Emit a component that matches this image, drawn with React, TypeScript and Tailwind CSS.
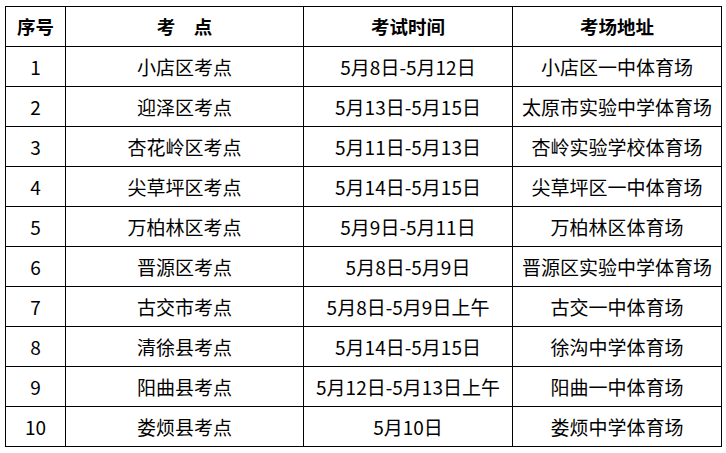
const rows = [
  ["1", "小店区考点", "5月8日-5月12日", "小店区一中体育场"],
  ["2", "迎泽区考点", "5月13日-5月15日", "太原市实验中学体育场"],
  ["3", "杏花岭区考点", "5月11日-5月13日", "杏岭实验学校体育场"],
  ["4", "尖草坪区考点", "5月14日-5月15日", "尖草坪区一中体育场"],
  ["5", "万柏林区考点", "5月9日-5月11日", "万柏林区体育场"],
  ["6", "晋源区考点", "5月8日-5月9日", "晋源区实验中学体育场"],
  ["7", "古交市考点", "5月8日-5月9日上午", "古交一中体育场"],
  ["8", "清徐县考点", "5月14日-5月15日", "徐沟中学体育场"],
  ["9", "阳曲县考点", "5月12日-5月13日上午", "阳曲一中体育场"],
  ["10", "娄烦县考点", "5月10日", "娄烦中学体育场"],
];

export default function App() {
  return (
    <div className="min-h-[453px] w-[726px] bg-white pl-[5px] pt-[6px] font-['Noto_Sans_CJK_SC',sans-serif] text-black">
      <table className="w-[716px] table-fixed border-collapse">
        <colgroup>
          <col className="w-[60px]" />
          <col className="w-[238px]" />
          <col className="w-[209px]" />
          <col className="w-[209px]" />
        </colgroup>
        <thead>
          <tr className="h-[40px]">
            <th className="border-[1.5px] border-black p-0 text-center text-[18.5px] font-bold leading-none">序号</th>
            <th className="border-[1.5px] border-black p-0 text-center text-[18.5px] font-bold leading-none">考&emsp;点</th>
            <th className="border-[1.5px] border-black p-0 text-center text-[18.5px] font-bold leading-none">考试时间</th>
            <th className="border-[1.5px] border-black p-0 text-center text-[18.5px] font-bold leading-none">考场地址</th>
          </tr>
        </thead>
        <tbody>
          {rows.map((r) => (
            <tr key={r[0]} className="h-[40px]">
              {r.map((c, i) => (
                <td key={i} className="whitespace-nowrap border-[1.5px] border-black p-0 text-center text-[19px] leading-none">
                  {c}
                </td>
              ))}
            </tr>
          ))}
        </tbody>
      </table>
    </div>
  );
}
